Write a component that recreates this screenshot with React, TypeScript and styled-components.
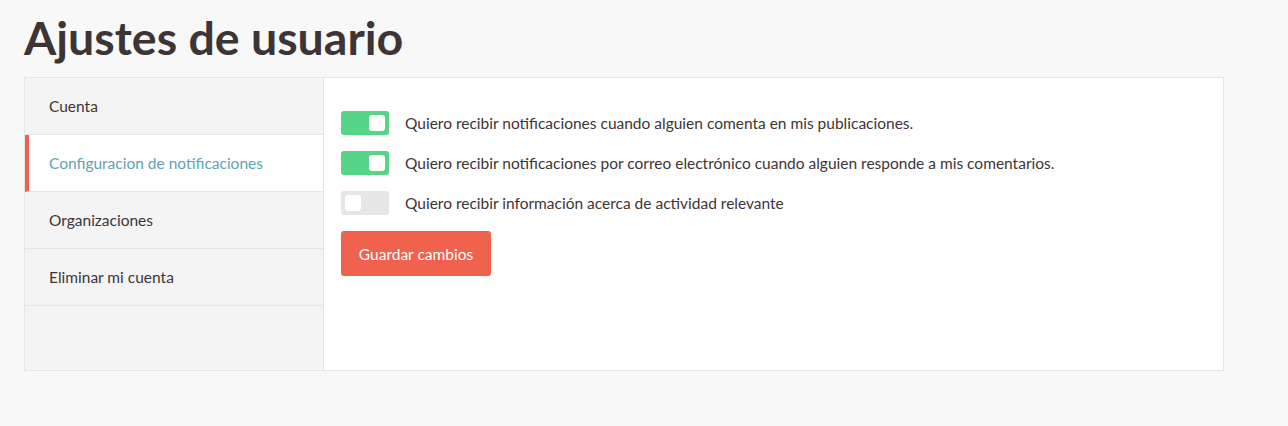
import React from "react";
import styled, { createGlobalStyle } from "styled-components";

const Global = createGlobalStyle`
  html, body { margin: 0; padding: 0; background: #f8f8f8; }
  body { font-family: Lato, "Noto Sans", sans-serif; color: #3d3535; }
  * { box-sizing: border-box; }
`;

const Page = styled.div`
  padding: 8px 24px 0 24px;
  width: 1248px;
`;

const Title = styled.h1`
  margin: 0 0 10px 0;
  font-size: 46.5px;
  line-height: 59px;
  font-weight: 700;
  color: #3d3535;
`;

const Panel = styled.div`
  display: flex;
  width: 1200px;
  height: 294px;
  border: 1px solid #e6e6e6;
  background: #fff;
`;

const Sidebar = styled.nav`
  width: 299px;
  background: #f4f4f4;
  border-right: 1px solid #e6e6e6;
  display: flex;
  flex-direction: column;
`;

const NavItem = styled.div<{ $active?: boolean }>`
  height: 57px;
  display: flex;
  align-items: center;
  padding-left: ${(p) => (p.$active ? "20px" : "24px")};
  border-bottom: 1px solid #e6e6e6;
  border-left: ${(p) => (p.$active ? "4px solid #f0614e" : "none")};
  background: ${(p) => (p.$active ? "#fff" : "transparent")};
  color: ${(p) => (p.$active ? "#5fa3b4" : "#3d3535")};
  font-size: 15.5px;
`;

const Content = styled.div`
  flex: 1;
  padding: 33px 17px;
  display: flex;
  flex-direction: column;
  gap: 16px;
`;

const Row = styled.label`
  display: flex;
  align-items: center;
  gap: 16px;
  font-size: 15.5px;
  color: #3d3535;
  height: 24px;
  line-height: 22px;
`;

const Toggle = styled.span<{ $on?: boolean }>`
  width: 48px;
  height: 24px;
  border-radius: 3px;
  background: ${(p) => (p.$on ? "#55d585" : "#e6e6e6")};
  display: flex;
  align-items: center;
  justify-content: ${(p) => (p.$on ? "flex-end" : "flex-start")};
  padding: 0 4px;
  flex-shrink: 0;
`;

const Knob = styled.span`
  width: 16px;
  height: 16px;
  border-radius: 3px;
  background: #fff;
`;

const Button = styled.button`
  align-self: flex-start;
  width: 150px;
  height: 45px;
  border: none;
  border-radius: 3px;
  background: #f0614e;
  color: #fff;
  font-family: inherit;
  font-size: 15.5px;
  cursor: pointer;
`;

const rows = [
  { on: true, text: "Quiero recibir notificaciones cuando alguien comenta en mis publicaciones." },
  { on: true, text: "Quiero recibir notificaciones por correo electrónico cuando alguien responde a mis comentarios." },
  { on: false, text: "Quiero recibir información acerca de actividad relevante" },
];

export default function App() {
  return (
    <Page>
      <Global />
      <Title>Ajustes de usuario</Title>
      <Panel>
        <Sidebar>
          <NavItem>Cuenta</NavItem>
          <NavItem $active>Configuracion de notificaciones</NavItem>
          <NavItem>Organizaciones</NavItem>
          <NavItem>Eliminar mi cuenta</NavItem>
        </Sidebar>
        <Content>
          {rows.map((r, i) => (
            <Row key={i}>
              <Toggle $on={r.on}>
                <Knob />
              </Toggle>
              {r.text}
            </Row>
          ))}
          <Button>Guardar cambios</Button>
        </Content>
      </Panel>
    </Page>
  );
}
